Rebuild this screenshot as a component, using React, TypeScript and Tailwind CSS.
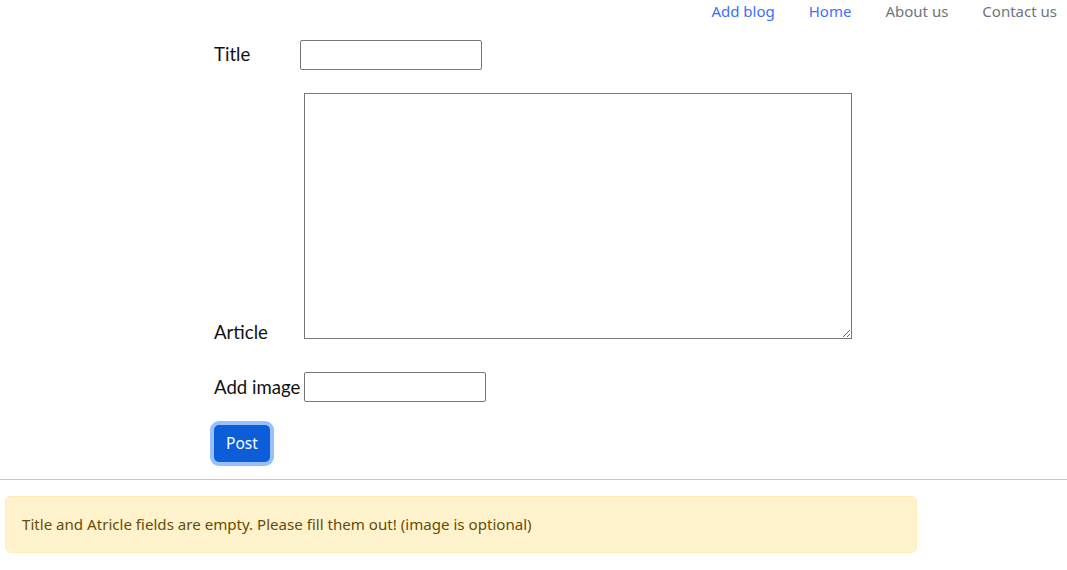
import React from 'react';

const links = [
  { label: 'Add blog', active: true },
  { label: 'Home', active: true },
  { label: 'About us', active: false },
  { label: 'Contact us', active: false },
];

const App = () => {
  return (
    <div className="min-h-screen bg-white text-black font-['Noto_Sans',sans-serif]">
      {/* top nav */}
      <nav className="flex justify-end gap-[34px] pr-[10px] h-6 text-[15px] leading-[22px]">
        {links.map((l) => (
          <a key={l.label} className={l.active ? 'text-[#3d6efd]' : 'text-[#6c757d]'}>
            {l.label}
          </a>
        ))}
      </nav>

      {/* blog form */}
      <form className="ml-[214px] mt-[16px] font-['Lato',sans-serif] text-[18.6px] text-[#111]">
        <div className="flex items-center h-[30px]">
          <label className="w-[86px] leading-6 -mt-[2px]">Title</label>
          <input type="text" className="w-[182px] h-[30px] border border-[#767676] rounded-[2px] bg-white" />
        </div>

        <div className="flex items-end mt-[23px]">
          <label className="w-[90px] leading-6">Article</label>
          <textarea className="w-[548px] h-[246px] mb-[5px] border border-[#767676] bg-white" />
        </div>

        <div className="flex items-center h-[30px] mt-[28px]">
          <label className="w-[90px] leading-6 whitespace-nowrap">Add image</label>
          <input type="text" className="w-[182px] h-[30px] border border-[#767676] rounded-[2px] bg-white" />
        </div>

        <button
          type="button"
          className="mt-[23px] w-[56px] h-[37px] rounded-[5px] bg-[#0b5ed7] text-white text-[15.5px] font-['Noto_Sans',sans-serif] ring-4 ring-[#98c0fa]"
        >
          Post
        </button>
      </form>

      <hr className="mt-[17px] border-t border-[#c8c8c8]" />

      <div className="ml-[5px] mt-[16px] w-[912px] h-[57px] flex items-center px-[16px] bg-[#fff3cd] border border-[#ffecb5] rounded-[6px] text-[#664d03] text-[15.1px]">
        Title and Atricle fields are empty. Please fill them out! (image is optional)
      </div>
    </div>
  );
};

export default App;
